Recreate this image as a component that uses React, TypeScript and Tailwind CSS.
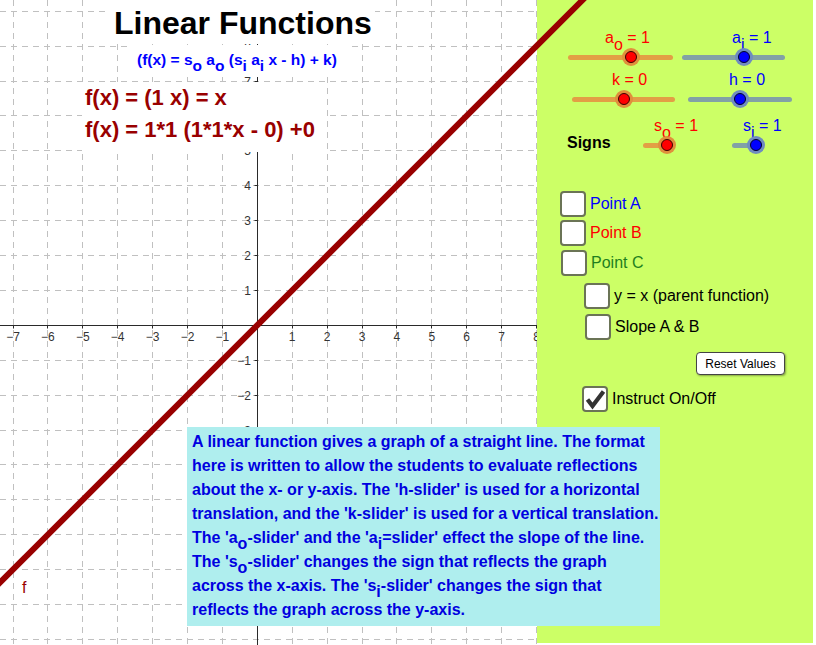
import React from "react";

const UNIT = 34.9;
const OX = 257.3;
const OY = 325.3;
const W = 537;
const H = 645;

const px = (v: number) => Math.floor(v) + 0.5;

const Grid: React.FC = () => {
  const xs = Array.from({ length: 16 }, (_, i) => i - 7);
  const ys = Array.from({ length: 19 }, (_, i) => i - 9);
  const ax = px(OX);
  const ay = px(OY);
  return (
    <svg width={W} height={H} className="block">
      {xs.map(k => (
        <line key={"gx" + k} x1={px(OX + k * UNIT)} y1={0} x2={px(OX + k * UNIT)} y2={H} stroke="#c0c0c0" strokeDasharray="6 5" />
      ))}
      {ys.map(k => (
        <line key={"gy" + k} x1={0} y1={px(OY - k * UNIT)} x2={W} y2={px(OY - k * UNIT)} stroke="#c0c0c0" strokeDasharray="6 5" />
      ))}
      <line x1={ax} y1={0} x2={ax} y2={H} stroke="#2a2a2a" />
      <line x1={0} y1={ay} x2={W} y2={ay} stroke="#2a2a2a" />
      {xs.filter(k => k !== 0).map(k => (
        <g key={"lx" + k}>
          <line x1={px(OX + k * UNIT)} y1={ay} x2={px(OX + k * UNIT)} y2={ay + 3} stroke="#2a2a2a" />
          <text x={OX + k * UNIT} y={341} fontSize={12} fill="#333" textAnchor="middle" fontFamily="Liberation Sans, Arial, sans-serif">
            {k < 0 ? "\u2212" + -k : k}
          </text>
        </g>
      ))}
      {ys.filter(k => k !== 0 && k > -9).map(k => (
        <g key={"ly" + k}>
          <line x1={ax - 3} y1={px(OY - k * UNIT)} x2={ax} y2={px(OY - k * UNIT)} stroke="#2a2a2a" />
          <text x={251} y={OY - k * UNIT + 4.5} fontSize={12} fill="#333" textAnchor="end" fontFamily="Liberation Sans, Arial, sans-serif">
            {k < 0 ? "\u2212" + -k : k}
          </text>
        </g>
      ))}
      <text x={22} y={593} fontSize={16} fill="#990000" fontFamily="Liberation Sans, Arial, sans-serif">f</text>
    </svg>
  );
};

const Sub: React.FC<{ children: React.ReactNode; drop?: string }> = ({ children, drop = "align-[-7px]" }) => (
  <span className={`leading-none ${drop}`}>{children}</span>
);

const Knob: React.FC<{ red: boolean }> = ({ red }) => (
  <svg width={20} height={20} className="block">
    <circle cx={10} cy={10} r={9} fill={red ? "#e08f3c" : "#6f8cc0"} />
    <circle cx={10} cy={10} r={5.5} fill={red ? "#ff0000" : "#0000ff"} stroke={red ? "#3a0000" : "#00002a"} strokeWidth={1} />
  </svg>
);

type SliderProps = {
  label: React.ReactNode;
  red: boolean;
  value: number;
  min: number;
  max: number;
  className: string;
  labelClass: string;
};

const Slider: React.FC<SliderProps> = ({ label, red, value, min, max, className, labelClass }) => {
  const pct = ((value - min) / (max - min)) * 100;
  return (
    <div className={`flex flex-col shrink-0 ${className}`}>
      <div className={`h-[20px] leading-5 text-[16px] whitespace-nowrap ${labelClass} ${red ? "text-[#ff0000]" : "text-[#0000ff]"}`}>
        {label}
      </div>
      <div className="relative h-[18px]">
        <div className={`mt-[6.5px] h-[5px] rounded-full ${red ? "bg-[#e29f45]" : "bg-[#82a1a6]"}`} />
        <div className="absolute top-[-1px]" style={{ left: `calc(${pct}% - 10px)` }}>
          <Knob red={red} />
        </div>
      </div>
    </div>
  );
};

const Box: React.FC<{ checked?: boolean }> = ({ checked }) => (
  <div className="w-[26px] h-[26px] shrink-0 rounded-[4px] border-2 border-[#6b7456] bg-white flex items-center justify-center">
    {checked && (
      <svg width={22} height={22} viewBox="0 0 22 22">
        <path d="M3.5 11.5 L8.5 18 L19.5 3.5" fill="none" stroke="#333" strokeWidth={4.2} strokeLinejoin="miter" />
      </svg>
    )}
  </div>
);

const CheckRow: React.FC<{ text: string; color: string; className: string; checked?: boolean }> = ({ text, color, className, checked }) => (
  <div className={`flex items-center gap-[4px] h-[26px] ${className}`}>
    <Box checked={checked} />
    <span className={`text-[16px] leading-5 whitespace-nowrap ${color}`}>{text}</span>
  </div>
);

const Panel: React.FC = () => (
  <div className="w-[276px] h-[643px] shrink-0 bg-[#ccff66] flex flex-col pt-[28px]">
    <div className="flex items-start">
      <Slider className="w-[105px] ml-[31px]" labelClass="pl-[37px]" red value={1} min={-5} max={5} label={<>a<Sub>o</Sub> = 1</>} />
      <Slider className="w-[103px] ml-[9px]" labelClass="pl-[50px]" red={false} value={1} min={-5} max={5} label={<>a<Sub>i</Sub> = 1</>} />
    </div>
    <div className="flex items-start mt-[4px]">
      <Slider className="w-[103px] ml-[35px]" labelClass="pl-[40px]" red value={0} min={-5} max={5} label="k = 0" />
      <Slider className="w-[104px] ml-[13px]" labelClass="pl-[41px]" red={false} value={0} min={-5} max={5} label="h = 0" />
    </div>
    <div className="flex items-start mt-[8px]">
      <div className="w-[76px] ml-[30px] mt-[17px] leading-5 text-[16px] font-bold text-black">Signs</div>
      <Slider className="w-[24px]" labelClass="pl-[11px]" red value={1} min={-1} max={1} label={<>s<Sub>o</Sub> = 1</>} />
      <Slider className="w-[24px] ml-[65px]" labelClass="pl-[11px]" red={false} value={1} min={-1} max={1} label={<>s<Sub>i</Sub> = 1</>} />
    </div>
    <CheckRow className="ml-[23px] mt-[37px]" text="Point A" color="text-[#0000ff]" />
    <CheckRow className="ml-[23px] mt-[3px]" text="Point B" color="text-[#ff0000]" />
    <CheckRow className="ml-[24px] mt-[4px]" text="Point C" color="text-[#1f7f1f]" />
    <CheckRow className="ml-[47px] mt-[7px]" text="y = x (parent function)" color="text-black" />
    <CheckRow className="ml-[48px] mt-[5px]" text="Slope A & B" color="text-black" />
    <button className="self-start ml-[159px] mt-[12px] w-[89px] h-[23px] bg-white border border-[#444] rounded-[4px] text-[12px] leading-4 text-black shadow-[1px_1px_2px_rgba(0,0,0,0.35)]">
      Reset Values
    </button>
    <CheckRow className="ml-[45px] mt-[11px]" text="Instruct On/Off" color="text-black" checked />
  </div>
);

const App: React.FC = () => {
  return (
    <div className="relative w-[816px] h-[645px] bg-white overflow-hidden flex font-['Liberation_Sans',Arial,sans-serif]">
      <div className="relative w-[537px] h-[645px] shrink-0">
        <Grid />
        <div className="absolute left-[110px] top-0 w-[265px] h-[44px] bg-white pl-[4px] pt-[7px]">
          <div className="text-[32px] leading-8 font-bold text-black whitespace-nowrap">Linear Functions</div>
        </div>
        <div className="absolute left-[127px] top-[45px] w-[223px] h-[32px] bg-white pl-[10px] pt-[7px]">
          <div className="h-4 text-[15.5px] leading-4 font-bold text-[#0000ff] whitespace-nowrap">
            (f(x) = s<Sub drop="align-[-6px]">o</Sub> a<Sub drop="align-[-6px]">o</Sub> (s<Sub drop="align-[-6px]">i</Sub> a<Sub drop="align-[-6px]">i</Sub> x - h) + k)
          </div>
        </div>
        <div className="absolute left-[82px] top-[82px] w-[244px] h-[70px] bg-white pl-[3px]">
          <div className="text-[22px] leading-8 font-bold text-[#990000] whitespace-nowrap">
            <div>f(x) = (1 x) = x</div>
            <div>f(x) = 1*1 (1*1*x - 0) +0</div>
          </div>
        </div>
      </div>
      <Panel />
      <svg width={816} height={645} className="absolute inset-0 pointer-events-none">
        <line x1={-10} y1={OY + OX + 10} x2={OY + OX + 10} y2={-10} stroke="#990000" strokeWidth={6} />
      </svg>
      <div className="absolute left-[187px] top-[427px] w-[473px] h-[199px] bg-[#afeeee] pl-[5px] pt-[3px] text-[16px] leading-6 font-bold text-[#0000e0] whitespace-nowrap">
        <div className="h-6">A linear function gives a graph of a straight line. The format</div>
        <div className="h-6">here is written to allow the students to evaluate reflections</div>
        <div className="h-6">about the x- or y-axis. The 'h-slider' is used for a horizontal</div>
        <div className="h-6">translation, and the 'k-slider' is used for a vertical translation.</div>
        <div className="h-6">The 'a<Sub drop="align-[-6px]">o</Sub>-slider' and the 'a<Sub drop="align-[-6px]">i</Sub>=slider' effect the slope of the line.</div>
        <div className="h-6">The 's<Sub drop="align-[-6px]">o</Sub>-slider' changes the sign that reflects the graph</div>
        <div className="h-6">across the x-axis. The 's<Sub drop="align-[-6px]">i</Sub>-slider' changes the sign that</div>
        <div className="h-6">reflects the graph across the y-axis.</div>
      </div>
    </div>
  );
};

export default App;
